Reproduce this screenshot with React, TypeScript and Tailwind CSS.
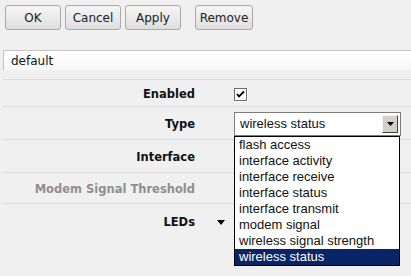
import React from "react";

const items = [
  "flash access",
  "interface activity",
  "interface receive",
  "interface status",
  "interface transmit",
  "modem signal",
  "wireless signal strength",
  "wireless status",
];

function Btn({ children, className = "" }: { children: React.ReactNode; className?: string }) {
  return (
    <button
      className={
        "h-[25px] w-[56px] rounded-[3px] border border-[#a9a9a9] bg-gradient-to-b from-[#f6f6f6] to-[#dedede] text-[12px] text-[#222] " +
        className
      }
      style={{ fontFamily: "Verdana, 'DejaVu Sans', sans-serif" }}
    >
      {children}
    </button>
  );
}

function Row({ label, h, gray, children }: { label: string; h: string; gray?: boolean; children?: React.ReactNode }) {
  return (
    <div className={"flex items-center border-t border-[#dcdcdc] " + h}>
      <div
        className={
          "w-[192px] shrink-0 pt-[4px] text-right text-[11.5px] font-bold " + (gray ? "text-[#8f8f8f]" : "text-[#111]")
        }
      >
        {label}
      </div>
      <div className="ml-[39px] flex items-center">{children}</div>
    </div>
  );
}

export default function App() {
  return (
    <div
      className="relative h-[276px] w-[411px] overflow-hidden bg-[#f0f0f0]"
      style={{ fontFamily: "'DejaVu Sans', Verdana, sans-serif" }}
    >
      <div className="flex pl-[5px] pt-[5px]">
        <Btn>OK</Btn>
        <Btn className="ml-[4px]">Cancel</Btn>
        <Btn className="ml-[4px]">Apply</Btn>
        <Btn className="ml-[14px] w-[58px]">Remove</Btn>
      </div>
      <div className="ml-[3px] mt-[20px] flex h-[20px] items-center border-l border-t border-[#c4c4c4] bg-gradient-to-b from-[#ffffff] to-[#f7f7f7] pl-[7px] text-[12px] text-[#111]">
        default
      </div>
      <div className="ml-[3px] mt-[9px]">
        <Row label="Enabled" h="h-[27px]">
          <div className="relative mt-[2px] h-[13px] w-[13px] border border-[#6f6f6f] bg-white shadow-[1px_1px_0_#ffffff]">
            <svg viewBox="0 0 11 11" className="absolute left-0 top-0 h-[11px] w-[11px]">
              <path d="M2 5 L4 7.5 L9 2.5" stroke="#000" strokeWidth="1.8" fill="none" />
            </svg>
          </div>
        </Row>
        <Row label="Type" h="h-[33px]">
          <div
            className="mt-[2px] flex h-[24px] w-[167px] items-center justify-between border border-[#7d7d7d] bg-white pl-[5px] pr-[2px] text-[13px] text-[#111]"
            style={{ fontFamily: "'Liberation Sans', Arial, sans-serif" }}
          >
            <span>wireless status</span>
            <div className="flex h-[18px] w-[16px] items-center justify-center border border-t-[#f4f4f4] border-l-[#f4f4f4] border-r-[#404040] border-b-[#404040] bg-[#d4d0c8]">
              <svg viewBox="0 0 7 4" className="h-[4px] w-[7px]">
                <path d="M0 0 H7 L3.5 4 Z" fill="#000" />
              </svg>
            </div>
          </div>
        </Row>
        <Row label="Interface" h="h-[33px]" />
        <Row label="Modem Signal Threshold" h="h-[31px]" gray />
        <Row label="LEDs" h="h-[34px]">
          <div className="-ml-[17px] mr-[9px] mt-[3px] h-0 w-0 border-l-[4px] border-r-[4px] border-t-[5px] border-l-transparent border-r-transparent border-t-black" />
          <div className="mt-[2px] h-[24px] w-[60px] border border-[#a0a0a0] bg-white" />
        </Row>
      </div>
      <div
        className="absolute left-[234px] top-[136px] w-[166px] border border-black bg-white text-[13px] text-[#111]"
        style={{ fontFamily: "'Liberation Sans', Arial, sans-serif" }}
      >
        {items.map((it, i) => (
          <div
            key={it}
            className={
              "flex h-[16px] items-center pl-[4px] " +
              (i === items.length - 1 ? "bg-[#0a2468] text-white" : "")
            }
          >
            {it}
          </div>
        ))}
      </div>
    </div>
  );
}
